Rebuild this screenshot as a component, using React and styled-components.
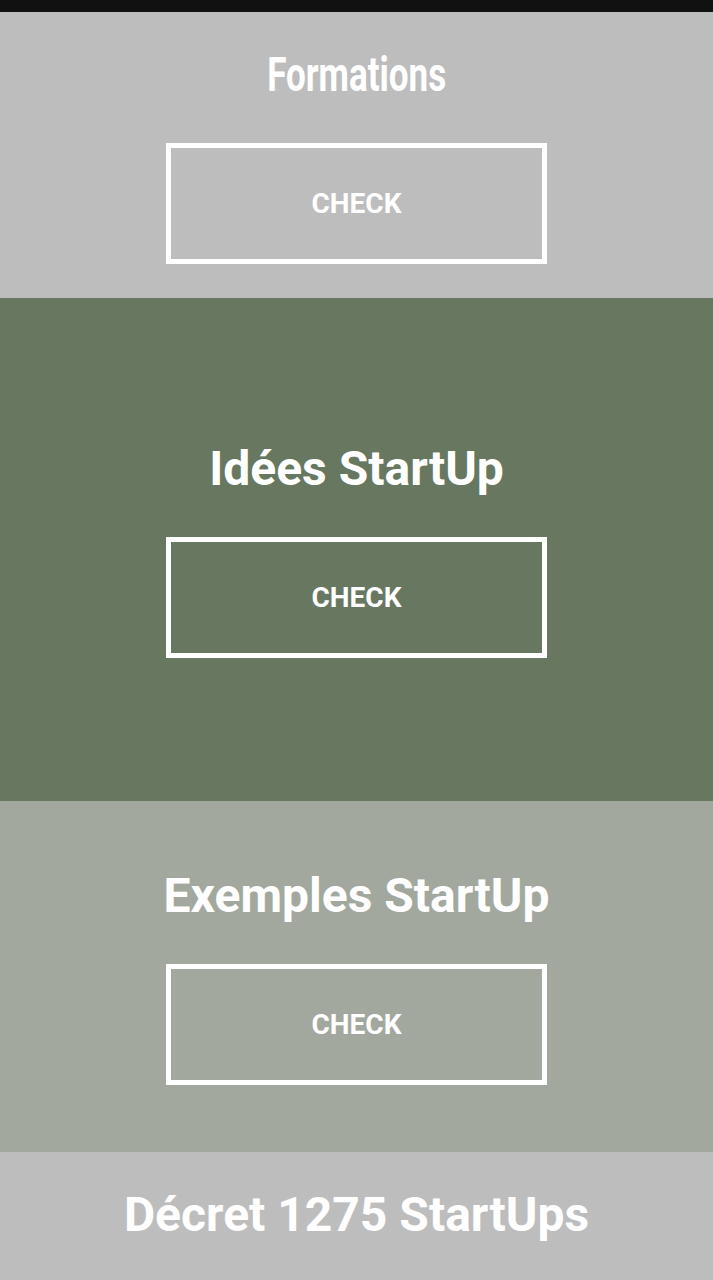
import React from 'react';
import styled, { createGlobalStyle } from 'styled-components';

const Global = createGlobalStyle`
    body {
        margin: 0;
        background: #bdbdbd;
        font-family: Roboto, "Noto Sans", sans-serif;
    }
`

const StatusBar = styled.div`
    height: 12px;
    background: #111111;
`

const Section = styled.section`
    display: flex;
    flex-direction: column;
    align-items: center;
    justify-content: center;
    height: ${({h}) => h}px;
    background: ${({bg}) => bg};
`

const Title = styled.h2`
    margin: 0;
    font-size: 48px;
    font-weight: 700;
    line-height: 56px;
    color: #ffffff;
    ${({squeeze}) => squeeze ? `transform: scaleX(${squeeze});` : ''}
`

const Check = styled.button`
    box-sizing: border-box;
    width: 381px;
    height: 121px;
    margin-top: 40px;
    border: 5px solid #ffffff;
    background: transparent;
    color: #ffffff;
    font-family: Roboto, "Noto Sans", sans-serif;
    font-size: 28px;
    font-weight: 700;
    cursor: pointer;
`

const sections = [
    {title: 'Formations', bg: '#bdbdbd', h: 286, squeeze: 0.73},
    {title: 'Idées StartUp', bg: '#677760', h: 503},
    {title: 'Exemples StartUp', bg: '#a3a89f', h: 351},
    {title: 'Décret 1275 StartUps', bg: '#bdbdbd', h: 286},
]

const App = () => <>
    <Global/>
    <StatusBar/>
    {sections.map(({title, bg, h, squeeze}) =>
        <Section key={title} bg={bg} h={h}>
            <Title squeeze={squeeze}>{title}</Title>
            <Check>CHECK</Check>
        </Section>
    )}
</>

export default App;
